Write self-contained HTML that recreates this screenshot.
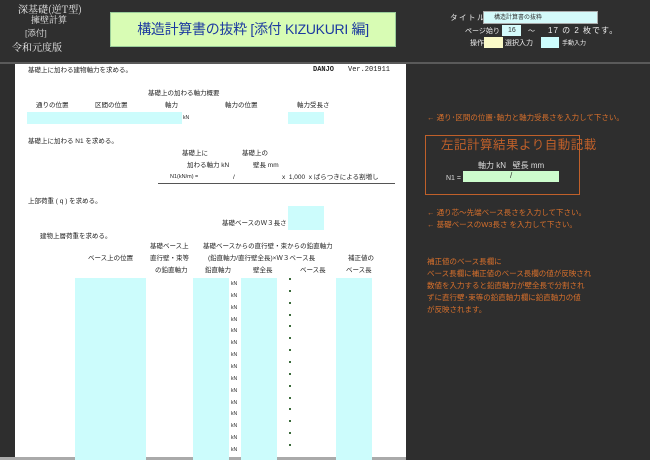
<!DOCTYPE html>
<html><head><meta charset="utf-8"><style>
*{margin:0;padding:0;box-sizing:border-box}
body{width:650px;height:460px;background:#2e2e2e;position:relative;overflow:hidden;font-family:"Liberation Sans","Noto Sans CJK JP",sans-serif;}
.a{position:absolute;white-space:nowrap;line-height:1}
.s{font-size:6.5px;color:#222}
.w{color:#eee}
.o{color:#d8702c;font-size:7.5px}
.c{position:absolute;background:#ccfcfc}
</style></head><body>
<div class="a" style="left:0;top:0;width:650px;height:63px;background:#2f2f2f"></div>
<div class="a" style="left:0;top:62px;width:650px;height:2px;background:#5a5a5a"></div>
<div class="a w" style="left:18px;top:4px;font-size:10px;font-family:'Noto Serif CJK SC',serif">深基礎(逆T型)</div>
<div class="a w" style="left:31px;top:15px;font-size:9px;font-family:'Noto Serif CJK SC',serif">擁壁計算</div>
<div class="a" style="left:25px;top:29px;font-size:8.5px;color:#ccc">[添付]</div>
<div class="a w" style="left:12px;top:42px;font-size:10px;font-family:'Noto Serif CJK SC',serif">令和元度版</div>
<div class="a" style="left:110px;top:12px;width:286px;height:35px;background:#d8fcb4;border:1px solid #9c9;text-align:center;line-height:33px;font-size:14px;color:#1c3aa0;letter-spacing:-0.3px">構造計算書の抜粋 [添付 KIZUKURI 編]</div>
<div class="a w" style="left:450px;top:14px;font-size:7.5px;letter-spacing:1.5px">タイトル</div>
<div class="a" style="left:483px;top:11px;width:115px;height:13px;background:#d4fafa;border:1px solid #aaa;font-size:6px;color:#333;padding:3px 0 0 10px">構造計算書の抜粋</div>
<div class="a w" style="left:465px;top:28px;font-size:7px">ページ始り</div>
<div class="a" style="left:502px;top:25px;width:19px;height:11px;background:#d4fafa;font-size:7px;color:#333;padding:2px 0 0 6px">16</div>
<div class="a w" style="left:528px;top:28px;font-size:7px">～</div>
<div class="a w" style="left:548px;top:27px;font-size:8px;letter-spacing:1px">17 の 2 枚です。</div>
<div class="a w" style="left:470px;top:40px;font-size:7px">操作</div>
<div class="a" style="left:484px;top:37px;width:19px;height:11px;background:#fafac8"></div>
<div class="a w" style="left:505px;top:40px;font-size:7px">選択入力</div>
<div class="a" style="left:541px;top:37px;width:18px;height:11px;background:#ccfcfc"></div>
<div class="a w" style="left:562px;top:41px;font-size:6px">手動入力</div>

<div class="a" style="left:15px;top:64px;width:391px;height:396px;background:#fff"></div>
<div class="a" style="left:0;top:457px;width:406px;height:3px;background:#aaa"></div>
<div class="a s" style="left:28px;top:68px">基礎上に加わる建物軸力を求める。</div>
<div class="a s" style="left:313px;top:67px;font-weight:bold;font-family:'Liberation Mono',monospace;font-size:7px">DANJO</div>
<div class="a s" style="left:348px;top:67px;font-family:'Liberation Mono',monospace;font-size:7px">Ver.201911</div>
<div class="a s" style="left:148px;top:91px">基礎上の加わる軸力概要</div>
<div class="a s" style="left:36px;top:103px">通りの位置</div>
<div class="a s" style="left:95px;top:103px">区間の位置</div>
<div class="a s" style="left:165px;top:103px">軸力</div>
<div class="a s" style="left:225px;top:103px">軸力の位置</div>
<div class="a s" style="left:297px;top:103px">軸力受長さ</div>
<div class="c" style="left:27px;top:112px;width:155px;height:12px"></div>
<div class="a s" style="left:183px;top:116px;font-size:5px">kN</div>
<div class="c" style="left:288px;top:112px;width:36px;height:12px"></div>
<div class="a s" style="left:28px;top:139px">基礎上に加わる N1 を求める。</div>
<div class="a s" style="left:182px;top:151px">基礎上に</div>
<div class="a s" style="left:242px;top:151px">基礎上の</div>
<div class="a s" style="left:187px;top:163px">加わる軸力 kN</div>
<div class="a s" style="left:253px;top:163px">壁長 mm</div>
<div class="a s" style="left:170px;top:175px;font-size:5.5px">N1(kN/m) =</div>
<div class="a s" style="left:233px;top:175px">/</div>
<div class="a s" style="left:282px;top:175px">x &nbsp;1,000 &nbsp;x ばらつきによる割増し</div>
<div class="a" style="left:158px;top:183px;width:237px;height:1px;background:#555"></div>
<div class="a s" style="left:28px;top:199px">上部荷重 ( q ) を求める。</div>
<div class="c" style="left:288px;top:206px;width:36px;height:24px"></div>
<div class="a s" style="left:222px;top:221px">基礎ベースのＷ３長さ</div>
<div class="a s" style="left:40px;top:234px">建物上層荷重を求める。</div>
<div class="a s" style="left:150px;top:244px">基礎ベース上</div>
<div class="a s" style="left:203px;top:244px">基礎ベースからの直行壁・束からの鉛直軸力</div>
<div class="a s" style="left:88px;top:256px">ベース上の位置</div>
<div class="a s" style="left:150px;top:256px">直行壁・束等</div>
<div class="a s" style="left:208px;top:256px">(鉛直軸力/直行壁全長)×Ｗ３ベース長</div>
<div class="a s" style="left:348px;top:256px">補正値の</div>
<div class="a s" style="left:155px;top:268px">の鉛直軸力</div>
<div class="a s" style="left:205px;top:268px">鉛直軸力</div>
<div class="a s" style="left:253px;top:268px">壁全長</div>
<div class="a s" style="left:300px;top:268px">ベース長</div>
<div class="a s" style="left:346px;top:268px">ベース長</div>
<div class="c" style="left:75px;top:278px;width:71px;height:182px"></div>
<div class="c" style="left:193px;top:278px;width:36px;height:182px"></div>
<div class="c" style="left:241px;top:278px;width:36px;height:182px"></div>
<div class="c" style="left:336px;top:278px;width:36px;height:182px"></div>
<div id="rows"></div>
<script>
var h='';for(var i=0;i<15;i++){var y=282+i*11.85;h+='<div class="a s" style="left:231px;top:'+y+'px;font-size:5px">kN</div><div class="a" style="left:289px;top:'+(y-4)+'px;width:2px;height:2px;background:#3a6a3a"></div>';}
document.getElementById('rows').innerHTML=h;
</script>

<div class="a o" style="left:427px;top:114px">← 通り･区間の位置･軸力と軸力受長さを入力して下さい。</div>
<div class="a" style="left:425px;top:135px;width:155px;height:60px;border:1.5px solid #c0602a"></div>
<div class="a" style="left:441px;top:139px;font-size:12.5px;color:#c0602a;letter-spacing:0.5px">左記計算結果より自動記載</div>
<div class="a" style="left:478px;top:162px;font-size:8px;color:#ddd">軸力 kN &nbsp;&nbsp;壁長 mm</div>
<div class="a" style="left:446px;top:175px;font-size:7px;color:#ddd">N1 =</div>
<div class="a" style="left:463px;top:171px;width:96px;height:11px;background:#ccfccc"></div>
<div class="a" style="left:510px;top:172px;font-size:8px;color:#333">/</div>
<div class="a o" style="left:427px;top:209px">← 通り芯～先端ベース長さを入力して下さい。</div>
<div class="a o" style="left:427px;top:221px">← 基礎ベースのW3長さ を入力して下さい。</div>
<div class="a o" style="left:427px;top:256px;line-height:12px">補正値のベース長欄に<br>ベース長欄に補正値のベース長欄の値が反映され<br>数値を入力すると鉛直軸力が壁全長で分割され<br>ずに直行壁･束等の鉛直軸力欄に鉛直軸力の値<br>が反映されます。</div>
</body></html>
